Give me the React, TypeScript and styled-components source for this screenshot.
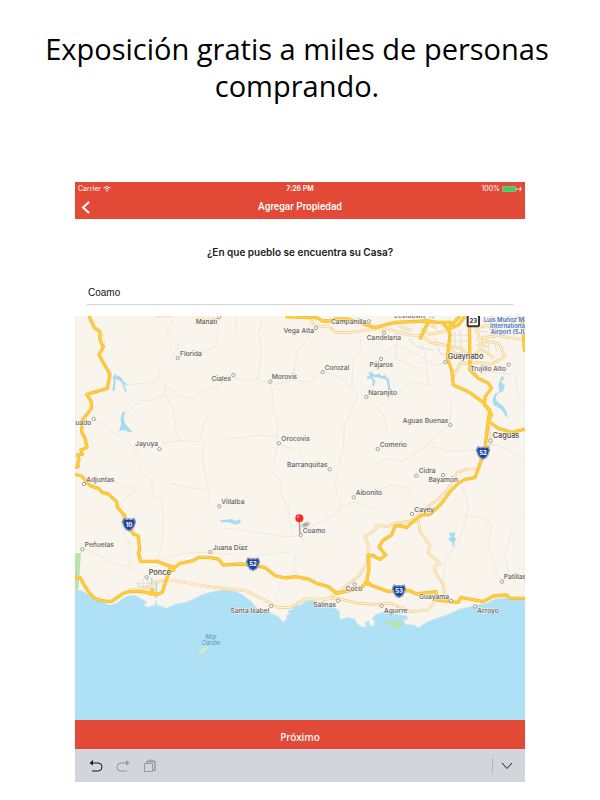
import React, { useState } from "react";
import styled, { createGlobalStyle } from "styled-components";

const GlobalStyle = createGlobalStyle`
  *, *::before, *::after { box-sizing: border-box; }
  body { margin: 0; background: #fff; }
`;

const ui = `Inter, "Liberation Sans", sans-serif`;
const red = "#e24a37";

const Page = styled.main`
  display: flex;
  flex-direction: column;
  align-items: center;
  padding: 30px 0 18px;
  font-family: ${ui};
  color: #111;
`;

const Headline = styled.h1`
  margin: 0;
  padding: 0 42px 0 36px;
  min-height: 152px;
  font: 400 29px/37px "Open Sans", "Noto Sans", sans-serif;
  color: #000;
  text-align: center;
`;

const Device = styled.section`
  width: 75%;
  display: flex;
  flex-direction: column;
`;

const Header = styled.header`
  background: ${red};
  color: #fff;
`;

const TripleRow = styled.div<{ $height: number; $inset: number }>`
  display: grid;
  grid-template-columns: 1fr auto 1fr;
  align-items: center;
  height: ${(p) => p.$height}px;
  padding: 0 ${(p) => p.$inset}px;
`;

const StatusText = styled.span<{ $end?: boolean; $strong?: boolean }>`
  display: flex;
  align-items: center;
  gap: 2px;
  justify-self: ${(p) => (p.$end ? "end" : "start")};
  font-size: 7px;
  line-height: 13px;
  font-weight: ${(p) => (p.$strong ? 600 : 400)};
`;

const NavTitle = styled.h2`
  margin: 0;
  font: 500 10px/14px Roboto, ${ui};
`;

const IconButton = styled.button`
  display: flex;
  align-items: center;
  justify-content: center;
  padding: 0;
  border: 0;
  background: none;
  color: inherit;
  cursor: pointer;
  &:disabled { cursor: default; color: #96989c; }
`;

const BackButton = styled(IconButton)`
  justify-self: start;
`;

const Form = styled.div`
  display: flex;
  flex-direction: column;
  padding: 26px 12px 11px;
`;

const Question = styled.label`
  font-size: 10px;
  line-height: 14px;
  font-weight: 600;
  text-align: center;
  color: #1a1a1a;
`;

const TownInput = styled.input`
  width: 100%;
  height: 24px;
  margin-top: 22px;
  padding: 0 1px;
  border: 0;
  border-bottom: 1px solid #d4d4d6;
  border-radius: 0;
  outline: none;
  background: transparent;
  font: 400 10px/14px "Liberation Sans", sans-serif;
  color: #111;
`;

const MapDrawing = styled.svg`
  display: block;
  width: 100%;
  height: auto;
  background: #aee1f6;
`;

const NextButton = styled.button`
  height: 29px;
  padding: 5px 0 0;
  border: 0;
  background: ${red};
  color: #fff;
  font: 500 10px/14px "Noto Sans", "Open Sans", sans-serif;
  cursor: pointer;
`;

const KeyboardBar = styled.div`
  display: flex;
  align-items: center;
  justify-content: space-between;
  height: 33px;
  padding: 0 12px 0 14px;
  background: #d2d5db;
  color: #1b1b1d;
`;

const Tools = styled.div<{ $gap: number }>`
  display: flex;
  align-items: center;
  gap: ${(p) => p.$gap}px;
`;

const Divider = styled.span`
  width: 1px;
  height: 15px;
  background: #b2b4b9;
`;

type Label = {
  t: string;
  x: number;
  y: number;
  end?: boolean;
  big?: boolean;
  dot?: [number, number];
};

const labels: Label[] = [
  { t: "Manatí", x: 362, y: 27, dot: [433, 6] },
  { t: "Florida", x: 315, y: 122, dot: [308, 129] },
  { t: "Ciales", x: 468, y: 197, end: true, dot: [475, 180] },
  { t: "Utuado", x: 49, y: 330, end: true, dot: [56, 312] },
  { t: "Jayuya", x: 249, y: 394, end: true, dot: [253, 402] },
  { t: "Vega Alta", x: 717, y: 55, end: true, dot: [723, 39] },
  { t: "Campanilla", x: 874, y: 27, end: true, dot: [882, 19] },
  { t: "Candelaria", x: 978, y: 75, end: true, dot: [927, 53] },
  { t: "Levittown", x: 1050, y: 8, end: true },
  { t: "Corozal", x: 749, y: 164, dot: [743, 171] },
  { t: "Pájaros", x: 954, y: 155, end: true, dot: [918, 132] },
  { t: "Naranjito", x: 880, y: 240, dot: [874, 246] },
  { t: "Morovis", x: 590, y: 192, dot: [586, 200] },
  { t: "Orocovis", x: 619, y: 378, dot: [612, 385] },
  { t: "Barranquitas", x: 758, y: 456, end: true, dot: [764, 463] },
  { t: "Guaynabo", x: 1118, y: 133, big: true, dot: [1111, 141] },
  { t: "Trujillo Alto", x: 1293, y: 167, end: true, dot: [1301, 149] },
  { t: "Aguas Buenas", x: 1120, y: 323, end: true, dot: [1126, 330] },
  { t: "Comerio", x: 914, y: 395, dot: [908, 402] },
  { t: "Caguas", x: 1253, y: 369, big: true, dot: [1246, 377] },
  { t: "Cidra", x: 1031, y: 474, dot: [1024, 482] },
  { t: "Bayamón", x: 1149, y: 502, end: true, dot: [1104, 480] },
  { t: "Cayey", x: 1018, y: 591, dot: [1011, 597] },
  { t: "Aibonito", x: 842, y: 541, dot: [836, 547] },
  { t: "Adjuntas", x: 34, y: 500, dot: [27, 507] },
  { t: "Villalba", x: 439, y: 567, dot: [433, 574] },
  { t: "Peñuelas", x: 29, y: 695, dot: [22, 703] },
  { t: "Juana Díaz", x: 413, y: 704, dot: [406, 711] },
  { t: "Ponce", x: 221, y: 780, big: true, dot: [215, 787] },
  { t: "Coamo", x: 683, y: 654, dot: [677, 660] },
  { t: "Santa Isabel", x: 583, y: 894, end: true, dot: [589, 873] },
  { t: "Coco", x: 862, y: 829, end: true, dot: [839, 808] },
  { t: "Salinas", x: 783, y: 875, end: true, dot: [789, 857] },
  { t: "Guayama", x: 1122, y: 851, end: true, dot: [1128, 857] },
  { t: "Aguirre", x: 927, y: 893, dot: [920, 873] },
  { t: "Arroyo", x: 1207, y: 895, dot: [1200, 874] },
  { t: "Patillas", x: 1286, y: 793, dot: [1281, 800] },
];

const highways = [
  "M42 3 58 38 75 50V75L85 95 72 120 105 178 97 220 35 238 48 258 50 280 22 315 20 350 30 370 36 397 18 405 22 418 8 420 12 435 8 445 10 455 0 458",
  "M0 478 20 483 45 512 70 520 82 533 100 537 125 560 128 578 148 600 152 612 162 635 175 657 190 663 194 708 190 712 197 739 245 739 295 757",
  "M0 787H15L25 805Q45 840 60 850 80 860 110 859L145 835Q165 825 215 832L228 837H250L262 832 272 800 280 778 295 760 315 745 355 737 370 727 400 727 430 732 445 750 500 747 570 757 600 782 630 789 660 785 700 792 725 805 760 815 785 835 810 830 860 817 875 800 882 760 880 720 900 723",
  "M895 723 915 733 932 720 912 695 925 675 950 660 960 633 975 632 995 638 1010 623 1040 600 1065 598 1100 565 1125 530 1150 505 1170 493 1200 488 1212 455 1230 400 1238 330 1245 285 1228 270 1230 245 1250 220 1240 205 1210 190 1185 165 1183 0",
  "M875 800 890 812 900 815 940 830 1005 827 1025 837 1083 830 1085 855 1150 862 1158 847 1225 860 1255 843 1295 840 1305 850H1350",
  "M1155 3 1120 40 1125 60 1117 130 1130 165 1135 210 1180 230 1225 262 1238 280 1250 300 1240 318 1270 340 1310 352 1350 342",
  "M630 5 700 8Q725 3 742 18H765L780 12H820L860 25 900 38 960 22 1050 18 1090 22 1130 22",
  "M1035 73 1050 40 1062 18",
  "M1100 22 1120 42 1150 30 1170 5",
  "M1330 3 1342 25 1345 60 1349 110",
  "M228 837 234 825 225 832M280 765 295 757 296 770M875 800 880 812",
];

const roads = [
  "M700 3 720 32 765 36 780 52H825L900 42 940 42 1000 60 1040 62 1065 82 1118 92 1160 100 1182 122",
  "M240 3H290M360 12H435M1135 188 1155 145 1210 143 1250 147 1290 125 1272 85 1205 75",
  "M1198 25 1210 60 1222 105 1258 130M1117 90 1150 125 1170 130M1210 70 1270 62 1350 75",
  "M1035 40 1065 58 1095 52 1125 45M1210 38 1240 30 1260 60M960 25 985 40 1010 45M1070 3 1055 25 1085 38M1230 62 1225 90 1190 130",
  "M160 825 225 818 240 800 290 795 370 810 450 821 515 828 560 850 610 878 645 878 690 852 750 852 785 850 850 865 900 868 945 865 1010 890 1060 885 1083 855",
  "M1030 615 1035 650 1065 690 1060 715 1095 745 1080 752 1078 765 1092 790 1105 810 1110 855",
  "M900 640 905 630 935 635 960 625 1010 617 1060 575 1090 552 1120 520 1145 475 1175 462 1208 462",
  "M900 645 870 665 880 690 877 745 850 785 785 835 750 855",
  "M1240 335 1248 380 1235 410M900 645 905 630",
];

const boundaries =
  "M300 5 275 50 310 90 290 130 250 170 252 195 270 210 268 240 220 258 195 255 165 285 145 290M85 55 90 95M120 175 160 210 215 203 250 200M270 210 310 240 350 250 390 225 450 200M270 240 295 280 302 350 318 378 375 380 385 330 400 300M55 312 125 358 180 400 195 430M320 378 260 382M385 380 382 430 400 520 405 570M430 30 425 90 380 115M485 60 480 3M565 5 550 60 560 110 548 190 520 200 450 180M548 190 590 212 595 290 610 320 605 400 595 450M595 210 655 195 665 110 700 70 705 20M665 195 700 202 745 170 780 180 800 190 830 220 850 235M850 230 830 290 808 330 805 400 790 450M450 370 500 368 550 360 605 365M620 390 675 410 690 450M855 70 860 105 835 125 830 220M65 455 90 480 150 520 190 518M190 450 200 475 230 500 235 540 260 555 265 620 260 700 240 740M190 518 140 560 140 640 165 690 165 760M400 525 350 520 290 505M30 702 70 720 110 745 165 755 190 770M245 735 330 715 400 712 480 720M450 640 500 645 560 655 640 665 680 662M590 470 620 500 615 530 640 580 650 660M790 460 780 520 800 575 780 600 700 640M800 575 840 560 895 580M680 662 690 690 660 720 655 770 690 790M650 710 570 720 520 725M620 780 610 830 600 850M900 530 950 510 1010 520M920 270 1010 200 1060 210 1050 110 1030 80M905 270 930 310 935 350M1060 390 1080 360 1125 330 1130 250M900 450 930 430 980 440 1060 390 1120 410 1200 405M1160 510 1180 570 1170 620 1150 680 1110 740 1105 800M1170 600 1230 610 1250 630 1240 690 1260 760 1280 800 1300 770 1290 720 1310 650 1350 600M900 80 930 110 960 90 1010 110 1080 150 1120 140M970 50 960 130 1030 160M1190 190 1245 170 1320 180 1330 250 1350 270M1290 210 1280 190M1245 385 1290 400 1350 440";

const streets =
  "M180 805H230M185 813H230M192 795V815M205 790V815M218 790V815M1000 70 1025 95 1075 105M1080 70 1095 115 1130 125M985 50 1020 60M1140 50V95M1155 45 1160 110M1130 60H1180M1130 78H1180M1200 90 1240 95M1240 80V120M1260 80 1265 110M1200 50H1240M1130 110 1175 115";

const lakes = [
  "M112 228 116 198 113 185 122 176 125 184 133 183 140 190 148 203 160 208 153 210 147 206 156 233 151 232 142 207 136 198 122 191 119 228Z",
  "M132 350 139 325 136 315 142 290 151 293 146 307 150 325 157 333 173 352 158 350 149 344 147 349 143 344Z",
  "M450 614 470 612 480 618 497 612 496 625 480 629 462 622 438 622 436 616Z",
  "M1280 183 1289 188 1278 200 1290 213 1283 230 1270 235 1262 245 1265 258 1284 273 1295 290 1298 309 1290 300 1281 285 1268 277 1256 270 1253 252 1260 236 1273 231 1270 210Z",
  "M1121 656 1128 652 1133 655 1138 650 1141 656 1137 665 1144 672 1138 682 1138 694 1131 692 1132 682 1122 676 1120 668 1129 667Z",
];

const Shield = ({ x, y, n }: { x: number; y: number; n: string }) => (
  <g transform={`translate(${x} ${y})`}>
    <path d="M-15-17-6-14 0-16 6-14 15-17 19-7Q15 8 9 14L0 19-9 14Q-15 8-19-7Z" fill="#2450a3" stroke="#6b7fae" strokeWidth="5" />
    <path d="M-15-17-6-14 0-16 6-14 15-17 19-7Q15 8 9 14L0 19-9 14Q-15 8-19-7Z" fill="#1d439b" stroke="#c3cce2" strokeWidth="2" />
    <text y="7" textAnchor="middle" fontSize="18" fontWeight="700" fill="#fff">{n}</text>
  </g>
);

const TownMap = () => (
  <MapDrawing viewBox="0 0 1350 1212" role="img" aria-label="Mapa de Puerto Rico con Coamo marcado" fontFamily={ui}>
    <g transform="translate(0 -3)" strokeLinejoin="round" fill="none">
      <path
        fill="#f9f5ed"
        stroke="#d5e7e7"
        strokeWidth="2"
        d="M0 0H1350V858L1330 850 1295 848 1260 852 1235 865 1205 870 1155 882 1115 900 1075 913 1050 925 1030 938 1020 930 990 928 987 915 1000 912 995 902 960 897 950 889 920 892 900 900 890 912 899 918 897 935 882 928 885 919 870 921 874 937 858 935 845 925 840 913 820 907 795 913 793 888 780 880 735 862 705 855 690 860 675 872 668 870 660 875 650 877 653 884 640 886 643 897 634 902 636 910 625 922 610 905 583 892 555 889 545 880 530 860 500 838 480 829 450 826 425 828 400 833 380 840 355 853 330 862 300 868 275 880 255 872 246 872 244 855 240 868 222 877 207 872 215 860 195 850 180 841 160 842 145 850 125 865 105 870 85 862 60 852 40 838 20 827 0 825Z"
      />
      <path fill="#b9e3a8" d="M0 716 18 713 13 786 10 824 0 824ZM930 915 950 919 965 918 988 925 965 940 957 938 950 930 940 930Z" />
      <path fill="#d9eab5" d="M372 1020 375 1008 390 997 401 994 395 1003 386 1011Z" />
      <path d={boundaries} stroke="#ede8e0" strokeWidth="3" />
      <path d={streets} stroke="#e3ded5" strokeWidth="3" />
      {lakes.map((d) => <path key={d} d={d} fill="#a5dcf1" />)}
      <path d="M876 188 890 186 885 174 900 184 915 178M890 188 898 200 893 212M905 183 922 186 938 192 943 222M922 190 932 182" stroke="#a5dcf1" strokeWidth="7" />
      <path d="M230 788V830M244 800V850M1345 0 1350 20M1040 3 1060 18M1075 3V12" stroke="#a5dcf1" strokeWidth="5" />
      {roads.map((d) => <path key={d} d={d} stroke="#f3cb88" strokeWidth="8" />)}
      {roads.map((d) => <path key={d} d={d} stroke="#fdf2d6" strokeWidth="4" />)}
      {highways.map((d) => <path key={d} d={d} stroke="#f5b54a" strokeWidth="10" />)}
      {highways.map((d) => <path key={d} d={d} stroke="#ffd02e" strokeWidth="6" />)}
      {labels.map((l) => (
        <g key={l.t}>
          {l.dot && <circle cx={l.dot[0]} cy={l.dot[1]} r="5" fill="#fff" stroke="#77736f" strokeWidth="2" />}
          <text
            x={l.x}
            y={l.y}
            textAnchor={l.end ? "end" : "start"}
            fontSize={l.big ? 22 : 20}
            fontWeight="500"
            fill={l.big ? "#4c4a48" : "#65625f"}
            stroke="#f9f5ed"
            strokeWidth="3"
            paintOrder="stroke"
          >
            {l.t}
          </text>
        </g>
      ))}
      <g fontSize="18" fontWeight="600" fill="#4674c8" stroke="#f9f5ed" strokeWidth="3" paintOrder="stroke">
        <text x="1226" y="21">Luis Muñoz Marín</text>
        <text x="1245" y="39">International</text>
        <text x="1247" y="57">Airport (SJU)</text>
      </g>
      <g fontSize="18" fontStyle="italic" fontWeight="500" fill="#5f9fba" textAnchor="middle">
        <text x="408" y="972">Mar</text>
        <text x="408" y="991">Caribe</text>
      </g>
      <Shield x={162} y={628} n="10" />
      <Shield x={534} y={747} n="52" />
      <Shield x={972} y={828} n="53" />
      <Shield x={1224} y={413} n="52" />
      <rect x="1178" y="0" width="34" height="34" rx="5" fill="#fff" stroke="#333" strokeWidth="6" />
      <text x="1195" y="23" textAnchor="middle" fontSize="18" fontWeight="700" fill="#333">23</text>
      <defs>
        <radialGradient id="pinShadow">
          <stop offset="0" stopColor="#555" stopOpacity=".65" />
          <stop offset="1" stopColor="#555" stopOpacity="0" />
        </radialGradient>
      </defs>
      <ellipse cx="692" cy="629" rx="18" ry="10" fill="url(#pinShadow)" transform="rotate(-22 692 629)" />
      <path d="M673 620 675 658" stroke="#9b9b9b" strokeWidth="4" />
      <circle cx="673" cy="610" r="12" fill="#fb2d22" />
      <circle cx="669" cy="605" r="3" fill="#ffaaa2" />
    </g>
  </MapDrawing>
);

export default function App() {
  const [town, setTown] = useState("Coamo");
  return (
    <>
      <GlobalStyle />
      <Page>
        <Headline>Exposición gratis a miles de personas comprando.</Headline>
        <Device>
          <Header>
            <TripleRow $height={13} $inset={3}>
              <StatusText>
                Carrier
                <svg width="8" height="6" viewBox="0 0 16 12" fill="none" stroke="#fff" strokeWidth="2">
                  <path d="M1 4Q8-2 15 4M4 7Q8 3 12 7" />
                  <path d="M6 9.500Q8 8 10 9.500L8 12Z" fill="#fff" stroke="none" />
                </svg>
              </StatusText>
              <StatusText $strong>7:26 PM</StatusText>
              <StatusText $end>
                100%
                <svg width="20" height="6" viewBox="0 0 40 12">
                  <rect x="0.500" y="0.500" width="27" height="11" rx="2" fill="#2fd566" stroke="#f5b2a6" />
                  <path d="M29 4h2v4h-2z" fill="#fff" />
                  <path d="M38 0 33 7h3l-1 5 5-7h-3Z" fill="#fff" />
                </svg>
              </StatusText>
            </TripleRow>
            <TripleRow $height={24} $inset={6}>
              <BackButton type="button" aria-label="Atrás">
                <svg width="10" height="14" viewBox="0 0 10 14" fill="none" stroke="#fff" strokeWidth="2">
                  <path d="M8 2 2 7.500 8 13" />
                </svg>
              </BackButton>
              <NavTitle>Agregar Propiedad</NavTitle>
            </TripleRow>
          </Header>
          <Form>
            <Question htmlFor="town">¿En que pueblo se encuentra su Casa?</Question>
            <TownInput id="town" type="text" value={town} onChange={(e) => setTown(e.target.value)} />
          </Form>
          <TownMap />
          <NextButton type="button">Próximo</NextButton>
          <KeyboardBar>
            <Tools $gap={13}>
              <IconButton type="button" aria-label="Deshacer">
                <svg width="14" height="14" viewBox="0 0 14 14" fill="none" stroke="currentColor">
                  <path d="M2 4H9Q13 4 13 8T9 12H3" />
                  <path d="M4 1 0.500 4 4 6.500Z" fill="currentColor" stroke="none" />
                </svg>
              </IconButton>
              <IconButton type="button" aria-label="Rehacer" disabled>
                <svg width="14" height="14" viewBox="0 0 14 14" fill="none" stroke="currentColor">
                  <path d="M12 4H5Q1 4 1 8T5 12H11" />
                  <path d="M10 1 13.500 4 10 6.500Z" fill="currentColor" stroke="none" />
                </svg>
              </IconButton>
              <IconButton type="button" aria-label="Pegar" disabled>
                <svg width="14" height="14" viewBox="0 0 14 14" fill="none" stroke="currentColor">
                  <path d="M1.500 4.500H9.500V12.500H1.500Z" />
                  <path d="M4 4V2.500H12V11H10" strokeWidth="1.500" />
                  <path d="M6 2V1H10V2" />
                </svg>
              </IconButton>
            </Tools>
            <Tools $gap={8}>
              <Divider />
              <IconButton type="button" aria-label="Ocultar teclado">
                <svg width="12" height="8" viewBox="0 0 12 8" fill="none" stroke="currentColor">
                  <path d="M1 1 6 6.500 11 1" />
                </svg>
              </IconButton>
            </Tools>
          </KeyboardBar>
        </Device>
      </Page>
    </>
  );
}
